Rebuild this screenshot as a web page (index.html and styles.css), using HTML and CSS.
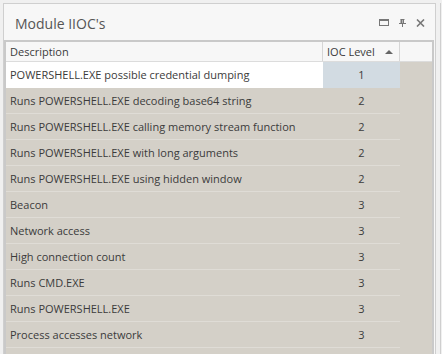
FILE: index.html
```html
<!DOCTYPE html>
<html lang="en">
<head>
  <meta charset="UTF-8" />
  <title>Module IIOC's</title>
  <link rel="stylesheet" href="styles.css">
</head>
<body>

<div class="dock">
  <div class="panel">
    <div class="panel-title">
      <span class="title">Module IIOC's</span>
      <div class="tools">
        <svg width="10" height="7" viewBox="0 0 10 7"><rect x="0.5" y="0.5" width="9" height="6" fill="none" stroke="#777" stroke-width="1"/><rect x="0" y="0" width="10" height="2" fill="#777"/></svg>
        <svg width="7" height="8" viewBox="0 0 7 8"><path d="M1.5 0.5h4M2 0.5v4M4.5 0.5v4M0 4.5h7M3.5 4.5v3.5" fill="none" stroke="#777" stroke-width="1"/><rect x="2" y="0.5" width="1.5" height="4" fill="#777"/></svg>
        <svg width="9" height="8" viewBox="0 0 9 8"><path d="M1 0.5l7 7M8 0.5l-7 7" stroke="#777" stroke-width="1.6"/></svg>
      </div>
    </div>

    <div class="grid">
      <div class="grid-head">
        <div class="col-desc">Description</div>
        <div class="col-level">IOC Level <span class="sort"></span></div>
        <div class="col-fill"></div>
      </div>
      <div class="grid-body" id="rows"></div>
    </div>
  </div>
  <div class="side"></div>
</div>

<script>
  const iocs = [
    ['POWERSHELL.EXE possible credential dumping', 1],
    ['Runs POWERSHELL.EXE decoding base64 string', 2],
    ['Runs POWERSHELL.EXE calling memory stream function', 2],
    ['Runs POWERSHELL.EXE with long arguments', 2],
    ['Runs POWERSHELL.EXE using hidden window', 2],
    ['Beacon', 3],
    ['Network access', 3],
    ['High connection count', 3],
    ['Runs CMD.EXE', 3],
    ['Runs POWERSHELL.EXE', 3],
    ['Process accesses network', 3],
    ['', '']
  ];

  const rows = document.getElementById('rows');
  iocs.forEach((ioc, i) => {
    const row = document.createElement('div');
    row.className = i === 0 ? 'row selected' : 'row';
    row.innerHTML =
      '<div class="col-desc">' + ioc[0] + '</div>' +
      '<div class="col-level">' + ioc[1] + '</div>' +
      '<div class="col-fill"></div>';
    rows.appendChild(row);
  });
</script>

</body>
</html>
```

FILE: styles.css
```css
body {
  margin: 0;
  background-color: #f0f0f0;
  font-family: "Open Sans", "Noto Sans", sans-serif;
  color: #3b3b3b;
  overflow: hidden;
}
.dock {
  display: flex;
  height: 354px;
  padding: 3px 0 0 3px;
  box-sizing: border-box;
}
.panel {
  width: 433px;
  border: 1px solid #cfcfcf;
  border-bottom: none;
  background-color: #f7f7f7;
  box-sizing: border-box;
  display: flex;
  flex-direction: column;
  overflow: hidden;
}
.side {
  width: 1px;
  margin-left: 4px;
  background-color: #cfcfcf;
}

.panel-title {
  flex: none;
  height: 36px;
  display: flex;
  align-items: center;
  justify-content: space-between;
  padding: 0 10px 0 11px;
}
.title {
  font-size: 14px;
  color: #555;
  margin-top: 2px;
}
.tools {
  display: flex;
  align-items: center;
  gap: 10px;
  margin-top: 1px;
}

.grid {
  flex: none;
  margin-right: 1px;
  border: 2px solid #c9c9c9;
  border-bottom: none;
  background-color: #d4d0c8;
  font-size: 11px;
}
.grid-head {
  display: flex;
  height: 20px;
  background-color: #f7f7f7;
  border-bottom: 1px solid #dcdcdc;
  box-sizing: border-box;
}
.grid-head > div {
  display: flex;
  align-items: center;
  border-right: 1px solid #d6d6d6;
  box-sizing: border-box;
}
.grid-head .col-desc {
  padding-left: 4px;
}
.grid-head .col-level {
  padding-left: 4px;
  justify-content: space-between;
  padding-right: 6px;
}
.sort {
  width: 0;
  height: 0;
  border-left: 4px solid transparent;
  border-right: 4px solid transparent;
  border-bottom: 4px solid #666;
}
.grid-head .col-fill {
  border-right: none;
}

.col-desc {
  width: 317px;
  flex: none;
}
.col-level {
  width: 77px;
  flex: none;
}
.col-fill {
  flex: 1;
}

.row {
  display: flex;
  height: 26px;
}
.row .col-desc, .row .col-level {
  display: flex;
  align-items: center;
  border-bottom: 1px solid #dfdcd6;
  box-sizing: border-box;
}
.row .col-desc {
  padding-left: 4px;
}
.row .col-level {
  justify-content: center;
}
.row.selected .col-desc {
  background-color: #ffffff;
  border-bottom-color: #ffffff;
}
.row.selected .col-level {
  background-color: #d2dbe2;
  border-bottom-color: #d2dbe2;
}
```
